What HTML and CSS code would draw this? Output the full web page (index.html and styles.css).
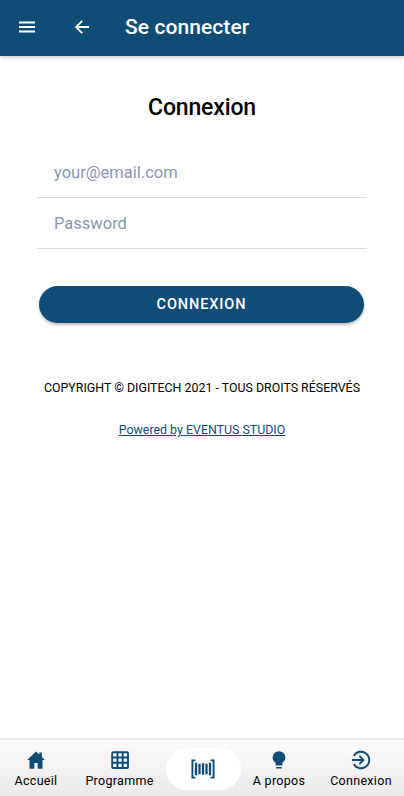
FILE: index.html
```html
<!DOCTYPE html>
<html lang="fr">
<head>
<meta charset="utf-8">
<title>Se connecter</title>
<link rel="stylesheet" href="styles.css">
</head>
<body>
<header class="toolbar">
  <svg class="menu-icon" width="16" height="12" viewBox="0 0 16 12"><path d="M0 1.5h16M0 6h16M0 10.5h16"/></svg>
  <svg class="back-icon" width="14" height="14" viewBox="0 0 14 14"><path d="M14 7H1.5M7.2 .8L1 7l6.2 6.2"/></svg>
  <h1 class="toolbar-title"><span>Se connecter</span></h1>
</header>
<main class="content">
  <h2 class="heading"><span>Connexion</span></h2>
  <form class="form">
    <input class="field" type="email" placeholder="your@email.com">
    <input class="field" type="password" placeholder="Password">
    <button class="submit" type="button"><span>CONNEXION</span></button>
  </form>
  <p class="copyright"><span>COPYRIGHT © DIGITECH 2021 - TOUS DROITS RÉSERVÉS</span></p>
  <p class="powered"><a href="#">Powered by EVENTUS STUDIO</a></p>
</main>
<nav class="tabs">
  <a class="tab">
    <svg width="20" height="20" viewBox="0 0 20 20"><path class="fill" d="M10 1.4L1.1 10h2.4v8.7h4.8v-5.8h3.4v5.8h4.8V10h2.4L15.9 7V2.6h-2.6v1.9z"/></svg>
    <span>Accueil</span>
  </a>
  <a class="tab">
    <svg width="20" height="20" viewBox="0 0 20 20"><rect class="line" x="2.2" y="2.2" width="15.8" height="15.8" rx="1"/><path class="line" d="M7.5 2.2v15.8M12.7 2.2v15.8M2.2 7.5h15.8M2.2 12.7h15.8"/></svg>
    <span>Programme</span>
  </a>
  <a class="tab-scan">
    <svg width="24" height="20" viewBox="0 0 24 20"><path class="line" d="M4.4 1.4H1.4v17.2h3M19.6 1.4h3v17.2h-3"/><path class="bars" d="M5 3.8v12.4M8.5 4.8v10.4M12 4.2v11.6M15.5 4.8v10.4M19 3.8v12.4"/></svg>
  </a>
  <a class="tab">
    <svg width="20" height="20" viewBox="0 0 20 20"><path class="fill" d="M10 1.2a6.4 6.4 0 0 0-6.4 6.2c0 2.4 1.3 4.1 3 5.4v2.8h6.8v-2.8c1.7-1.3 3-3 3-5.4A6.4 6.4 0 0 0 10 1.2zM7.2 16.9h5.6v1.7H7.2z"/></svg>
    <span>A propos</span>
  </a>
  <a class="tab">
    <svg width="20" height="20" viewBox="0 0 20 20"><path class="line" d="M2.9 5.7a8.3 8.3 0 1 1 0 8.6M.9 10h11.4M8.4 5.9l4.1 4.1-4.1 4.1"/></svg>
    <span>Connexion</span>
  </a>
</nav>
</body>
</html>
```
FILE: styles.css
```css
* { box-sizing: border-box; }
body {
  margin: 0;
  height: 796px;
  display: flex;
  flex-direction: column;
  background: #fff;
  color: #000;
  font-family: Roboto, sans-serif;
  overflow: hidden;
}
svg { display: block; flex: none; fill: none; }
h1, h2, p { margin: 0; font-weight: 500; }
.toolbar {
  height: 56px;
  flex: none;
  display: flex;
  align-items: center;
  padding: 0 0 2px 19px;
  background: #0f4d77;
  color: #fff;
  box-shadow: 0 1px 5px rgba(0, 0, 0, .25);
}
.toolbar svg { stroke: #fff; stroke-width: 1.8; }
.menu-icon { margin-right: 40px; }
.back-icon { margin-right: 36px; }
.toolbar-title { font-size: 21px; line-height: 28px; letter-spacing: .08px; }
.content { flex: 1; padding: 0 37px; }
.heading {
  margin-top: 38px;
  font-size: 23px;
  line-height: 28px;
  letter-spacing: -.15px;
  text-align: center;
}
.form { margin-top: 25px; display: flex; flex-direction: column; }
.field {
  height: 51px;
  padding: 0 17px;
  border: 0;
  border-bottom: 1px solid #dcdcdc;
  border-radius: 0;
  background: none;
  font: 400 16.5px/20px Roboto, sans-serif;
  outline: 0;
}
.field::placeholder { color: #8697b6; opacity: 1; }
.submit {
  height: 37px;
  margin: 37px 3px 0 2px;
  padding: 0;
  border: 0;
  border-radius: 19px;
  background: #0f4d77;
  color: #fff;
  font: 500 14.5px/20px Roboto, sans-serif;
  letter-spacing: .9px;
  box-shadow: 0 2px 3px rgba(0, 0, 0, .26);
}
.copyright { margin-top: 56px; font-size: 12.4px; line-height: 18px; font-weight: 400; text-align: center; white-space: nowrap; }
.powered { margin-top: 24px; font-size: 12.4px; line-height: 18px; font-weight: 400; text-align: center; }
.powered a { color: #0f4d77; }
.tabs {
  height: 58px;
  flex: none;
  display: grid;
  grid-template-columns: 72px 94px 75px 76px 88px;
  border-top: 2px solid #e9e9e9;
  background: linear-gradient(#fbfbfb, #eaeaea);
}
.tab {
  display: flex;
  flex-direction: column;
  align-items: center;
  padding-top: 10px;
  font-size: 12.5px;
  line-height: 18px;
  letter-spacing: .3px;
  white-space: nowrap;
}
.tab:nth-child(2) { padding-left: 1px; }
.tab span { margin-top: 2px; }
.tab-scan {
  height: 42px;
  margin-top: 8px;
  padding-right: 1px;
  border-radius: 21px;
  background: #fff;
  display: flex;
  align-items: center;
  justify-content: center;
}
.fill { fill: #0f4d77; }
.line { stroke: #0f4d77; stroke-width: 1.9; }
.bars { stroke: #0f4d77; stroke-width: 2.3; }
```
